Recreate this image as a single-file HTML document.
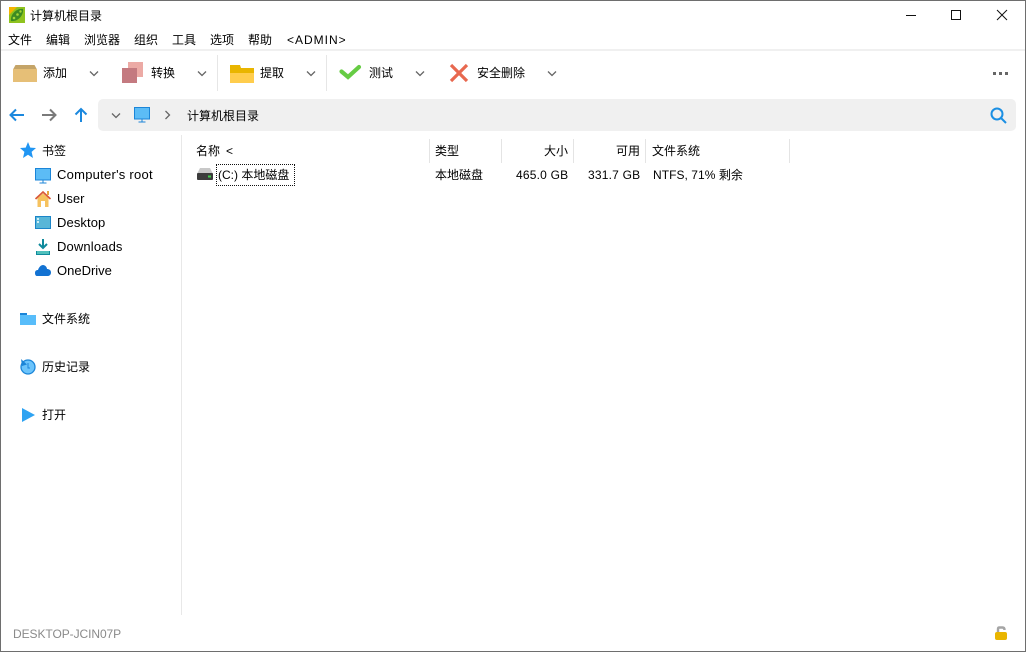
<!DOCTYPE html>
<html lang="zh"><head><meta charset="utf-8"><title>计算机根目录</title>
<style>
html,body{margin:0;padding:0;background:#fff}
#w{position:relative;width:1026px;height:652px;overflow:hidden;background:#fff;font-family:"Liberation Sans","Noto Sans CJK SC",sans-serif;font-size:12px;color:#000}
#w div,#w span.t{position:absolute}
.t{position:absolute;white-space:nowrap;line-height:16px;height:16px}
svg{position:absolute;overflow:visible}
.n{font-size:13px;letter-spacing:.1px}
.v{letter-spacing:.2px}
</style></head><body><div id="w">
<div style="left:0;top:0;width:1024px;height:650px;border:1px solid #6e6e6e"></div>
<div style="left:1px;top:49px;width:1024px;height:2px;background:#f0f0f0"></div>
<div style="left:98px;top:99px;width:918px;height:32px;background:#f0f0f0;border-radius:5px"></div>
<div style="left:217px;top:55px;width:1px;height:36px;background:#e6e6e6"></div>
<div style="left:326px;top:55px;width:1px;height:36px;background:#e6e6e6"></div>
<div style="left:181px;top:135px;width:1px;height:480px;background:#e8e8e8"></div>
<div style="left:429px;top:139px;width:1px;height:24px;background:#e4e4e4"></div>
<div style="left:501px;top:139px;width:1px;height:24px;background:#e4e4e4"></div>
<div style="left:573px;top:139px;width:1px;height:24px;background:#e4e4e4"></div>
<div style="left:645px;top:139px;width:1px;height:24px;background:#e4e4e4"></div>
<div style="left:789px;top:139px;width:1px;height:24px;background:#e4e4e4"></div>

<svg style="left:9px;top:7px" width="16" height="16" viewBox="0 0 16 16"><rect width="16" height="16" fill="#8fc31f"/><path d="M0 0h8L0 8z" fill="#f5b400"/><path d="M2 14C1 8 7 1 14 2c1 6-5 13-12 12z" fill="#3d8b22"/><circle cx="5" cy="11" r="1.300" fill="#a5d636"/><circle cx="8.500" cy="7.500" r="1.300" fill="#a5d636"/><circle cx="11.500" cy="4.500" r="1.200" fill="#a5d636"/></svg>
<span class="t" style="left:30px;top:8px">计算机根目录</span>

<svg style="left:906px;top:10px" width="110" height="12" viewBox="0 0 110 12" fill="none" stroke="#111" stroke-width="1"><path d="M0 5.500h10"/><rect x="45.500" y="0.500" width="9" height="9"/><path d="M91 0l10 10M101 0L91 10"/></svg>

<span class="t" style="left:8px;top:32px">文件</span>
<span class="t" style="left:46px;top:32px">编辑</span>
<span class="t" style="left:84px;top:32px">浏览器</span>
<span class="t" style="left:134px;top:32px">组织</span>
<span class="t" style="left:172px;top:32px">工具</span>
<span class="t" style="left:210px;top:32px">选项</span>
<span class="t" style="left:248px;top:32px">帮助</span>
<span class="t" style="left:287px;top:32px;letter-spacing:1px">&lt;ADMIN&gt;</span>

<svg style="left:13px;top:65px" width="24" height="17" viewBox="0 0 24 17"><path d="M2.500 0h19L24 4.500H0z" fill="#c4a468"/><rect y="4" width="24" height="13" fill="#e6bf77"/></svg>
<span class="t" style="left:43px;top:65px">添加</span>
<svg style="left:122px;top:62px" width="22" height="22" viewBox="0 0 22 22"><rect x="6" width="15" height="15" fill="#ecaaa5"/><rect y="6" width="15" height="15" fill="#c47a80"/></svg>
<span class="t" style="left:151px;top:65px">转换</span>
<svg style="left:230px;top:65px" width="24" height="18" viewBox="0 0 24 18"><path d="M0 0h10l1 3h13v6H0z" fill="#e9b500"/><rect y="8" width="24" height="10" fill="#ffcd4d"/></svg>
<span class="t" style="left:260px;top:65px">提取</span>
<svg style="left:339px;top:64px" width="23" height="17" viewBox="0 0 23 17"><path d="M2.500 7.500L9 13l11-10" fill="none" stroke="#66cc44" stroke-width="4.200" stroke-linecap="round"/></svg>
<span class="t" style="left:369px;top:65px">测试</span>
<svg style="left:450px;top:64px" width="18" height="18" viewBox="0 0 18 18"><path d="M1 1l16 16M17 1L1 17" fill="none" stroke="#e8684f" stroke-width="3.200"/></svg>
<span class="t" style="left:477px;top:65px">安全删除</span>
<svg style="left:90px;top:71px" width="470" height="6" viewBox="0 0 470 6" fill="none" stroke="#666" stroke-width="1.300"><path d="M0 0.500l4 4 4-4M108 0.500l4 4 4-4M217 0.500l4 4 4-4M326 0.500l4 4 4-4M458 0.500l4 4 4-4"/></svg>
<svg style="left:993px;top:72px" width="16" height="4" viewBox="0 0 16 4" fill="#666"><rect width="3" height="3"/><rect x="6" width="3" height="3"/><rect x="12" width="3" height="3"/></svg>

<svg style="left:10px;top:107px" width="80" height="16" viewBox="0 0 80 16" fill="none" stroke-width="2"><path d="M14 8H.5M6 2.500L.5 8 6 13.500" stroke="#1b88de"/><path d="M32 8h13.500M40 2.500L45.500 8 40 13.500" stroke="#7a7a7a"/><path d="M71 15V2M65.500 7.500L71 2l5.500 5.500" stroke="#1b88de"/></svg>
<svg style="left:112px;top:113px" width="8" height="5" viewBox="0 0 8 5" fill="none" stroke="#666" stroke-width="1.300"><path d="M0 .5l4 4 4-4"/></svg>
<svg style="left:134px;top:107px" width="16" height="16" viewBox="0 0 16 16"><rect x=".5" y=".5" width="15" height="11.500" fill="#5cbcf6" stroke="#1b85d8"/><path d="M8 12v3M4.500 15h7" stroke="#1b85d8"/></svg>
<svg style="left:165px;top:111px" width="5" height="8" viewBox="0 0 5 8" fill="none" stroke="#666" stroke-width="1.300"><path d="M.5 0l4 4-4 4"/></svg>
<span class="t" style="left:187px;top:108px">计算机根目录</span>
<svg style="left:990px;top:107px" width="17" height="17" viewBox="0 0 17 17" fill="none" stroke="#1b8fe3" stroke-width="2"><circle cx="7" cy="7" r="5.500"/><path d="M11 11l5 5"/></svg>

<svg style="left:20px;top:142px" width="16" height="17" viewBox="0 0 16 17"><path d="M8 0l2.300 5.600 5.700.4-4.400 3.900 1.400 6.100L8 12.700 3 16l1.400-6.100L0 6l5.700-.4z" fill="#2196f3"/></svg>
<span class="t" style="left:42px;top:143px">书签</span>
<svg style="left:35px;top:168px" width="16" height="16" viewBox="0 0 16 16"><rect x=".5" y=".5" width="15" height="11.500" fill="#5cbcf6" stroke="#1b85d8"/><path d="M8 12v3M4.500 15h7" stroke="#1b85d8"/></svg>
<span class="t n" style="left:57px;top:167px;letter-spacing:.25px">Computer's root</span>
<svg style="left:35px;top:191px" width="16" height="16" viewBox="0 0 16 16"><path d="M2.500 7L8 2.500 13.500 7v9h-11z" fill="#f6c25f"/><path d="M.5 8L8 1l7.500 7" fill="none" stroke="#d9593a" stroke-width="1.700"/><rect x="12" y="0" width="2" height="4" fill="#e8a63d"/><rect x="6" y="10" width="4" height="6" fill="#fff"/></svg>
<span class="t n" style="left:57px;top:191px;letter-spacing:0">User</span>
<svg style="left:35px;top:216px" width="16" height="13" viewBox="0 0 16 13"><rect x=".5" y=".5" width="15" height="12" fill="#58b6d8" stroke="#1b85c8"/><rect x="2" y="2" width="2" height="2" fill="#cdeef7"/><rect x="2" y="5" width="2" height="2" fill="#cdeef7"/></svg>
<span class="t n" style="left:57px;top:215px">Desktop</span>
<svg style="left:36px;top:239px" width="14" height="16" viewBox="0 0 14 16"><path d="M7 0v8M3 5l4 4 4-4" fill="none" stroke="#0f8a9c" stroke-width="2"/><rect y="12" width="14" height="4" fill="#4fc0bc"/><path d="M.5 12v3.500h13V12" fill="none" stroke="#0f8a9c"/></svg>
<span class="t n" style="left:57px;top:239px;letter-spacing:.14px">Downloads</span>
<svg style="left:35px;top:265px" width="16" height="11" viewBox="0 0 16 11"><path d="M0 8c0-2 1-3 3-3 1-3 3-5 5-5 2 0 4 2 4 4 2 0 4 1 4 3.500S14 11 13 11H2c-1 0-2-1-2-3z" fill="#1272d2"/></svg>
<span class="t n" style="left:57px;top:263px;letter-spacing:0">OneDrive</span>

<svg style="left:20px;top:313px" width="16" height="12" viewBox="0 0 16 12"><rect width="7" height="3" fill="#1b85d8"/><rect y="2" width="16" height="10" fill="#58bdfa"/></svg>
<span class="t" style="left:42px;top:311px">文件系统</span>
<svg style="left:20px;top:359px" width="16" height="16" viewBox="0 0 16 16"><circle cx="8" cy="8" r="7" fill="#6cc4fb" stroke="#1b85d8" stroke-width="1.300"/><path d="M1 0l6 5.500-5 1.500z" fill="#1b85d8"/><path d="M8 4v5h2" fill="none" stroke="#1b85d8"/></svg>
<span class="t" style="left:42px;top:359px">历史记录</span>
<svg style="left:22px;top:408px" width="13" height="14" viewBox="0 0 13 14"><path d="M0 0l13 7-13 7z" fill="#2ea3f2"/></svg>
<span class="t" style="left:42px;top:407px">打开</span>

<span class="t" style="left:196px;top:143px">名称</span>
<span class="t" style="left:226px;top:143px">&lt;</span>
<span class="t" style="left:435px;top:143px">类型</span>
<span class="t" style="left:544px;top:143px">大小</span>
<span class="t" style="left:616px;top:143px">可用</span>
<span class="t" style="left:652px;top:143px">文件系统</span>

<svg style="left:197px;top:168px" width="16" height="12" viewBox="0 0 16 12"><path d="M3 0h10l3 6H0z" fill="#c8c8c8"/><rect y="5" width="16" height="7" rx="1" fill="#3c3c3c"/><rect x="11" y="7.500" width="3" height="2" fill="#3fd04a"/></svg>
<div style="left:216px;top:164px;width:77px;height:20px;border:1px dotted #111"></div>
<span class="t" style="left:218px;top:167px">(C:) 本地磁盘</span>
<span class="t" style="left:435px;top:167px">本地磁盘</span>
<span class="t v" style="left:516px;top:167px">465.0 GB</span>
<span class="t v" style="left:588px;top:167px">331.7 GB</span>
<span class="t" style="left:653px;top:167px;letter-spacing:.05px">NTFS, 71% 剩余</span>

<span class="t" style="left:13px;top:626px;color:#8a8a8a;letter-spacing:-.07px">DESKTOP-JCIN07P</span>
<svg style="left:995px;top:626px" width="12" height="14" viewBox="0 0 12 14"><path d="M3 7V3q0-1.500 1.500-1.500h3Q9.500 1.500 9.500 4" fill="none" stroke="#a5a5a5" stroke-width="2.400"/><rect y="6" width="12" height="8" rx="2" fill="#e9b500"/></svg>
</div></body></html>
